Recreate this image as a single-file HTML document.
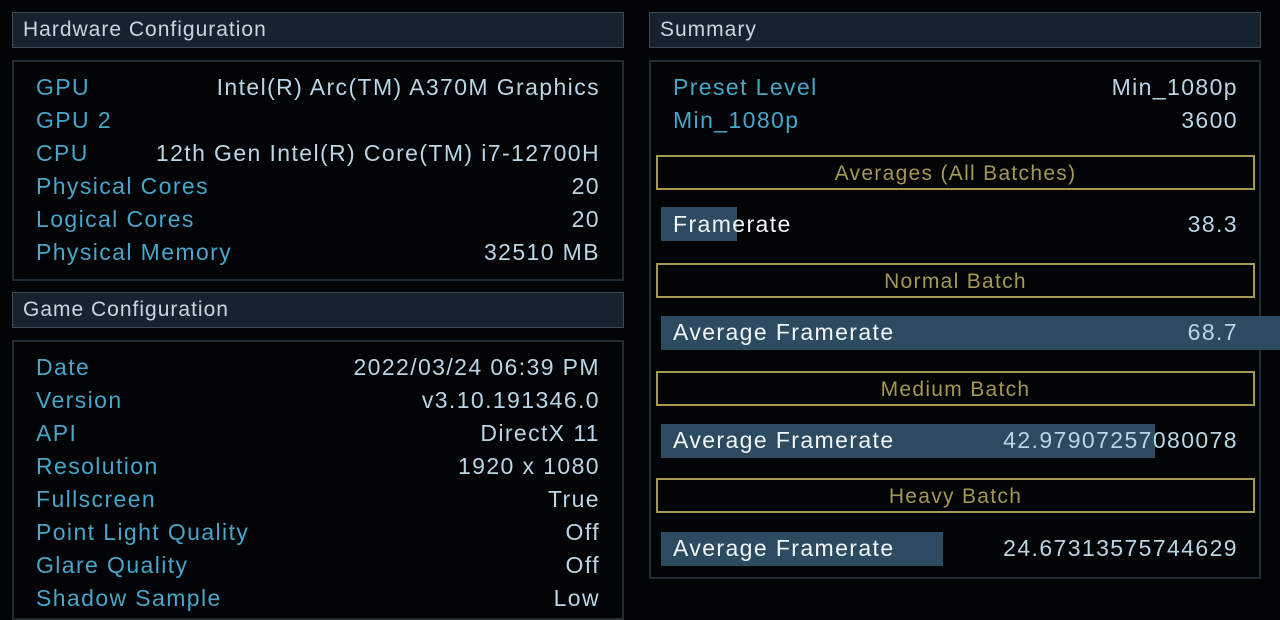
<!DOCTYPE html>
<html><head><style>
body{margin:0;width:1280px;height:590px;background:#020304;overflow:hidden;font-family:"Liberation Sans",sans-serif;position:relative}
.hdr{position:absolute;background:#17232c;border:1px solid #3a4b57;color:#c8d6df;font-size:21px;line-height:34px;padding-left:10px;box-sizing:border-box;letter-spacing:1px}
.box{position:absolute;border:2px solid #202b33;box-sizing:border-box}
.row{position:absolute;font-size:23px;letter-spacing:1.4px;line-height:30px;white-space:nowrap}
.l{color:#46a6cc}
.v{color:#b9d6e6;text-align:right}
.gold{position:absolute;border:2px solid #a49852;color:#a49852;font-size:21px;text-align:center;line-height:33px;box-sizing:border-box;left:656px;width:599px;height:35px;letter-spacing:1.3px}
.bar{position:absolute;background:#2c4a60;left:661px;height:34px}
.w{color:#f2f6f8}
</style></head><body>
<div class="hdr" style="left:12px;top:12px;width:612px;height:36px">Hardware Configuration</div>
<div class="box" style="left:12px;top:60px;width:612px;height:221px"></div>
<div class="hdr" style="left:12px;top:292px;width:612px;height:36px">Game Configuration</div>
<div class="box" style="left:12px;top:340px;width:612px;height:280px"></div>
<div class="hdr" style="left:649px;top:12px;width:612px;height:36px">Summary</div>
<div class="box" style="left:649px;top:60px;width:612px;height:519px"></div>

<div class="row l" style="left:36px;top:72px">GPU</div><div class="row v" style="right:680px;top:72px">Intel(R) Arc(TM) A370M Graphics</div>
<div class="row l" style="left:36px;top:105px">GPU 2</div>
<div class="row l" style="left:36px;top:138px">CPU</div><div class="row v" style="right:680px;top:138px">12th Gen Intel(R) Core(TM) i7-12700H</div>
<div class="row l" style="left:36px;top:171px">Physical Cores</div><div class="row v" style="right:680px;top:171px">20</div>
<div class="row l" style="left:36px;top:204px">Logical Cores</div><div class="row v" style="right:680px;top:204px">20</div>
<div class="row l" style="left:36px;top:237px">Physical Memory</div><div class="row v" style="right:680px;top:237px">32510 MB</div>

<div class="row l" style="left:36px;top:352px">Date</div><div class="row v" style="right:680px;top:352px">2022/03/24 06:39 PM</div>
<div class="row l" style="left:36px;top:385px">Version</div><div class="row v" style="right:680px;top:385px">v3.10.191346.0</div>
<div class="row l" style="left:36px;top:418px">API</div><div class="row v" style="right:680px;top:418px">DirectX 11</div>
<div class="row l" style="left:36px;top:451px">Resolution</div><div class="row v" style="right:680px;top:451px">1920 x 1080</div>
<div class="row l" style="left:36px;top:484px">Fullscreen</div><div class="row v" style="right:680px;top:484px">True</div>
<div class="row l" style="left:36px;top:517px">Point Light Quality</div><div class="row v" style="right:680px;top:517px">Off</div>
<div class="row l" style="left:36px;top:550px">Glare Quality</div><div class="row v" style="right:680px;top:550px">Off</div>
<div class="row l" style="left:36px;top:583px">Shadow Sample</div><div class="row v" style="right:680px;top:583px">Low</div>

<div class="row l" style="left:673px;top:72px">Preset Level</div><div class="row v" style="right:42px;top:72px">Min_1080p</div>
<div class="row l" style="left:673px;top:105px">Min_1080p</div><div class="row v" style="right:42px;top:105px">3600</div>

<div class="gold" style="top:155px">Averages (All Batches)</div>
<div class="bar" style="top:207px;width:76px"></div>
<div class="row w" style="left:673px;top:209px">Framerate</div><div class="row v" style="right:42px;top:209px">38.3</div>

<div class="gold" style="top:263px">Normal Batch</div>
<div class="bar" style="top:316px;width:619px"></div>
<div class="row w" style="left:673px;top:317px">Average Framerate</div><div class="row v" style="right:42px;top:317px">68.7</div>

<div class="gold" style="top:371px">Medium Batch</div>
<div class="bar" style="top:424px;width:494px"></div>
<div class="row w" style="left:673px;top:425px">Average Framerate</div><div class="row v" style="right:42px;top:425px">42.97907257080078</div>

<div class="gold" style="top:478px">Heavy Batch</div>
<div class="bar" style="top:532px;width:282px"></div>
<div class="row w" style="left:673px;top:533px">Average Framerate</div><div class="row v" style="right:42px;top:533px">24.67313575744629</div>
</body></html>
